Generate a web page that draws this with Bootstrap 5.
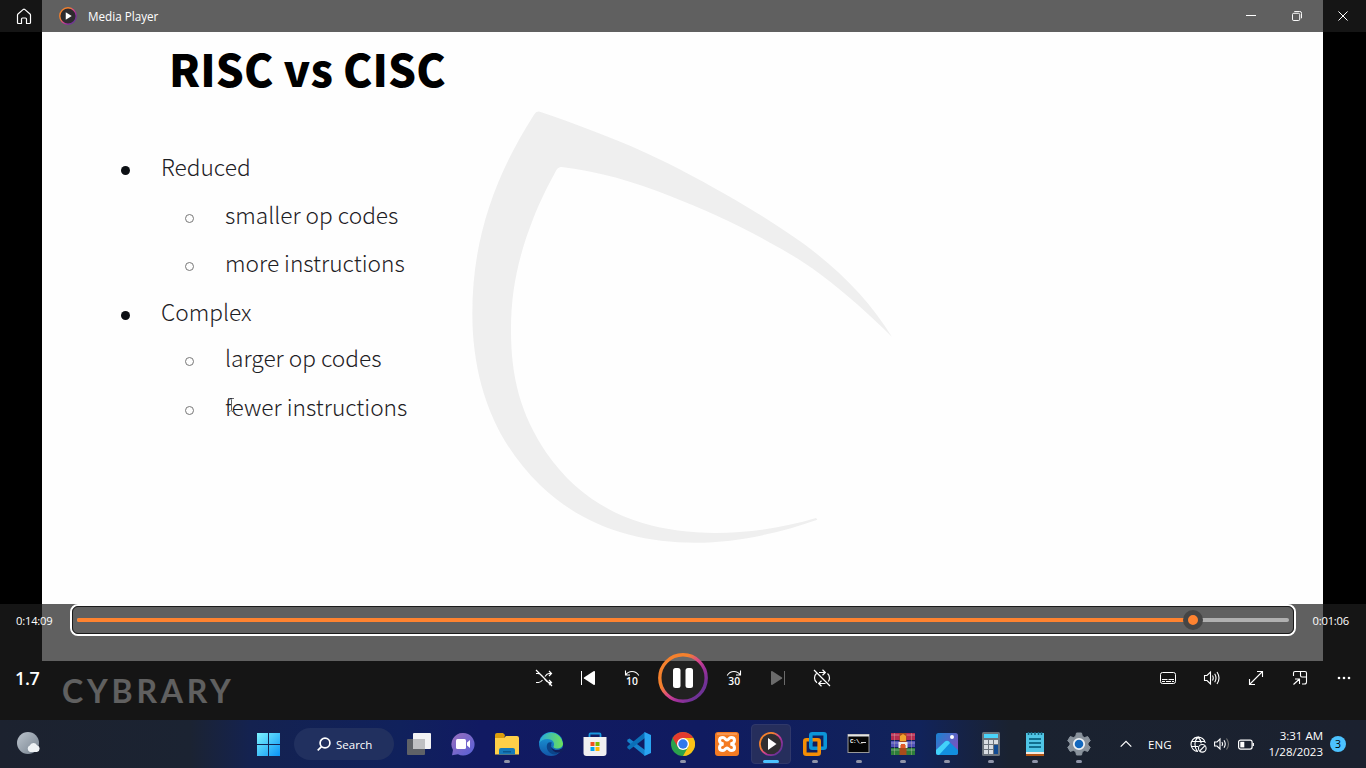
<!DOCTYPE html>
<html lang="en">
<head>
<meta charset="utf-8">
<meta name="viewport" content="width=device-width, initial-scale=1">
<title>Media Player</title>
<link href="https://cdn.jsdelivr.net/npm/bootstrap@5.3.0/dist/css/bootstrap.min.css" rel="stylesheet">
<style>
body{font-family:"Open Sans","Noto Sans",sans-serif;font-size:11px;line-height:16px;color:#fff;background:#000}
svg{display:block;flex:none}
.player{height:720px}
.video{width:1281px;margin-left:42px;height:720px;background:#000}
.slide{height:661px;background:#fefefe;font-family:"Noto Sans CJK SC","Open Sans",sans-serif;color:#1d2024}
.slide h1{font-size:44px;font-weight:900;color:#000;line-height:60px;padding:38px 0 0 127px;letter-spacing:.1px;white-space:nowrap}
.points{padding-top:45px;font-size:22.7px;font-weight:300}
.points li{height:48px;line-height:48px;white-space:nowrap}
.points .grp1{margin-top:1px}
.points .grp2{margin-top:-2px}
.points .last{margin-top:1px}
.lvl1{padding-left:78px}
.lvl2{padding-left:143px}
.dot{width:9px;height:9px;border-radius:50%;background:#0c0f14;margin:6px 31px 0 1px}
.ring{width:9px;height:9px;border-radius:50%;border:1px solid #777;margin:6px 31px 0 0}
.swirl{left:450px;top:90px}
.cursor{left:226px;top:397px}
.brandmark{margin:13px 0 0 20px;font-family:Lato,sans-serif;font-weight:700;font-size:32px;line-height:34px;letter-spacing:3.8px;color:#fff}
.shade{background:rgba(30,30,30,.706)}
.titlebar{height:32px}
.titlebar .cap{width:46px}
.appname{font-size:11.7px}
.seekrow{height:32px}
.seek{width:1226px;height:32px;border:2px solid #fff;border-radius:8px;padding:0}
.seek>div{border:1px solid #1b1b1b;border-radius:6px;height:100%;padding:0 4px}
.track{height:4px;background:#b0b0b0;border-radius:2px}
.fill{height:4px;background:#ff8330;border-radius:2px}
.thumb{width:20px;height:20px;border-radius:50%;border:5px solid #454545;background:#ff8330;top:-8px;transform:translateX(-50%)}
.time{width:70px;font-size:11.2px;letter-spacing:-.2px;padding-top:2px}
.ctrl{height:84px}
.side{width:522px}
.b44{width:44px}
.b58{width:58px}
.speed{font-size:18px;font-weight:600;letter-spacing:-.3px;padding-left:15px}
.taskbar{height:48px;background:linear-gradient(90deg,#1c222f 0,#1b2332 190px,#142250 250px,#10215c 400px,#111a62 480px,#101b60 700px,#11235a 920px,#1a2230 1010px,#1b212f 1366px)}
.slot{width:44px;height:48px}
.start{margin-left:217px}
.search{width:100px;height:32px;border-radius:16px;background:#21305f;margin:0 3px 0 4px;font-size:11.5px}
.search span{padding-top:1px}
.slot .pip{bottom:5px;left:19px;width:6px;height:3px;border-radius:2px;background:#8f94a8}
.slot.act::before{content:"";position:absolute;inset:4px 2px;border-radius:4px;background:#262e5c;border:1px solid #30386a}
.slot.act .pip{left:14px;width:16px;background:#4cc2ff}
.tray{font-size:11.5px}
.note{width:16px;height:16px;border-radius:50%;background:#4cc2ff;color:#000;font-size:10.5px}
</style>
</head>
<body class="overflow-hidden">
<main class="player position-relative">
  <div class="video">
    <section class="slide">
      <h1 class="m-0">RISC vs CISC</h1>
      <ul class="points list-unstyled m-0">
        <li class="lvl1 d-flex align-items-center"><i class="dot"></i><span>Reduced</span></li>
        <li class="lvl2 d-flex align-items-center"><i class="ring"></i><span>smaller op codes</span></li>
        <li class="lvl2 d-flex align-items-center"><i class="ring"></i><span>more instructions</span></li>
        <li class="lvl1 grp1 d-flex align-items-center"><i class="dot"></i><span>Complex</span></li>
        <li class="lvl2 grp2 d-flex align-items-center"><i class="ring"></i><span>larger op codes</span></li>
        <li class="lvl2 last d-flex align-items-center"><i class="ring"></i><span>fewer instructions</span></li>
      </ul>
    </section>
    <div class="brandmark">CYBRARY</div>
  </div>
  <svg class="swirl position-absolute" width="460" height="470" viewBox="0 0 1380 1410"><path fill="#efefef" d="M252 74Q260 60 274 67C380 103 490 145 580 185C680 230 770 280 860 332C930 373 1000 418 1062 462C1180 550 1260 635 1326 741C1260 675 1190 612 1110 552C1065 518 1015 488 960 458C860 402 760 357 660 318C550 275 450 245 335 231Q325 230 318 242C290 293 265 345 250 385C205 500 183 600 183 720C183 860 210 970 290 1090C360 1190 450 1260 580 1300C730 1345 930 1335 1098 1284L1102 1289C1000 1325 870 1358 735 1358C560 1358 400 1310 270 1185C130 1050 67 870 67 670C67 470 120 280 252 74Z"/></svg>
  <svg class="cursor position-absolute" width="10" height="16" viewBox="0 0 10 16" fill="none" stroke="#666"><path d="M2 1.500h2l1 1 1-1h2M5.500 2.500v11M2 14.500h2l1-1 1 1h2"/></svg>

  <div class="position-absolute top-0 start-0 w-100 h-100 d-flex flex-column justify-content-between">
    <header class="titlebar shade d-flex align-items-center">
      <svg width="16" height="17" viewBox="0 0 16 17" style="margin-left:16px" fill="none" stroke="#fff" stroke-width="1.2" stroke-linejoin="round"><path d="M1.500 7.200Q1.500 6.500 2 6L7.300 1.400Q8 .9 8.700 1.400L14 6Q14.500 6.500 14.500 7.200V14.500Q14.500 15.500 13.500 15.500H10.500V11Q10.500 10 9.500 10H6.500Q5.500 10 5.500 11V15.500H2.500Q1.500 15.500 1.500 14.500Z"/></svg>
      <svg width="18" height="18" viewBox="0 0 24 24" style="margin:0 11px 0 27px"><circle cx="12" cy="12" r="11" fill="#2d2b2e" stroke="url(#ringg)" stroke-width="1.800"/><path d="M9 7v10l8-5z" fill="#fff"/></svg>
      <span class="appname me-auto">Media Player</span>
      <div class="cap d-flex justify-content-center"><svg width="10" height="10" stroke="#fff"><path d="M0 4.500h10"/></svg></div>
      <div class="cap d-flex justify-content-center"><svg width="10" height="10" viewBox="0 0 11 11" fill="none" stroke="#fff" stroke-width="1.100"><rect x=".5" y="2.500" width="8" height="8" rx="1.500"/><path d="M2.500.5H8.500Q10.500.5 10.500 2.500V8"/></svg></div>
      <div class="cap d-flex justify-content-center"><svg width="10" height="10" viewBox="0 0 11 11" stroke="#fff" stroke-width="1.100"><path d="M.5.5l10 10M10.500.5l-10 10"/></svg></div>
    </header>

    <footer class="shade">
      <div class="seekrow d-flex align-items-center">
        <span class="time ps-3">0:14:09</span>
        <div class="seek"><div class="d-flex align-items-center"><div class="track w-100 position-relative"><div class="fill" style="width:92.1%"></div><i class="thumb position-absolute" style="left:92.1%"></i></div></div></div>
        <span class="time text-end" style="padding-right:17px">0:01:06</span>
      </div>
      <div class="ctrl d-flex align-items-center">
        <div class="side speed">1.7</div>
        <div class="b44 d-flex justify-content-center"><svg width="18" height="18" viewBox="0 0 18 18" fill="none" stroke="#fff" stroke-width="1.200"><path d="M1 4.500h2Q5.500 4.500 8 8L10 10.500Q12 13.500 14 13.500H16.500M1 13.500h2.500Q5.500 13.500 7.500 11M10 7.500Q12 4.500 14 4.500H16.500M14 2l2.500 2.500L14 7M14 11l2.500 2.500L14 16M1 1l16 16"/></svg></div>
        <div class="b44 d-flex justify-content-center"><svg width="16" height="16" viewBox="0 0 16 16"><path d="M1.500 1v14" stroke="#fff"/><path d="M4 7.400L13.500 1.200Q15 .6 15 2V14Q15 15.400 13.500 14.800L4 8.600Q3.400 8 4 7.400Z" fill="#fff"/></svg></div>
        <div class="b44 d-flex justify-content-center"><svg width="18" height="18" viewBox="0 0 18 18" fill="none" stroke="#fff" stroke-width="1.100"><path d="M2.500 1.500v4.500H7M2.700 5.800Q5 2.500 9 2.500Q13.500 2.500 15.800 6.500"/><text x="9" y="16.300" text-anchor="middle" font-size="10.300" font-weight="600" fill="#fff" stroke="none">10</text></svg></div>
        <div class="b58 d-flex justify-content-center"><svg width="50" height="50" viewBox="0 0 50 50"><defs><linearGradient id="ringg" x1=".15" y1=".2" x2=".85" y2=".8"><stop offset=".25" stop-color="#f5812d"/><stop offset=".5" stop-color="#d9478a"/><stop offset=".72" stop-color="#a2309b"/><stop offset="1" stop-color="#6f3296"/></linearGradient></defs><circle cx="25" cy="25" r="23.200" fill="#fff" fill-opacity=".055" stroke="url(#ringg)" stroke-width="3.400"/><rect x="15" y="15" width="7.500" height="20" rx="2.500" fill="#fff"/><rect x="27.500" y="15" width="7.500" height="20" rx="2.500" fill="#fff"/></svg></div>
        <div class="b44 d-flex justify-content-center"><svg width="18" height="18" viewBox="0 0 18 18" fill="none" stroke="#fff" stroke-width="1.100"><path d="M15.500 1.500v4.500H11M15.300 5.800Q13 2.500 9 2.500Q4.500 2.500 2.200 6.500"/><text x="9.200" y="16.300" text-anchor="middle" font-size="10.300" font-weight="600" fill="#fff" stroke="none">30</text></svg></div>
        <div class="b44 d-flex justify-content-center"><svg width="16" height="16" viewBox="0 0 16 16"><path d="M14.500 1v14" stroke="#6b6b6b"/><path d="M12 7.400L2.500 1.200Q1 .6 1 2V14Q1 15.400 2.500 14.800L12 8.600Q12.600 8 12 7.400Z" fill="#6b6b6b"/></svg></div>
        <div class="b44 d-flex justify-content-center"><svg width="18" height="18" viewBox="0 0 18 18" fill="none" stroke="#fff" stroke-width="1.200"><path d="M1 1l16 16M6 3.500H12M9.500.8L12.300 3.500 9.500 6.200M14.500 4.500Q16.500 6 16.500 9Q16.500 11 15.300 12.500M3.500 4.500Q1.500 6 1.500 9Q1.500 12 4 13.700M12.500 14.500H6M8.500 11.800L5.700 14.500 8.500 17.200"/></svg></div>
        <div class="ms-auto b44 d-flex justify-content-center"><svg width="16" height="12" fill="none" stroke="#fff"><rect x=".5" y=".5" width="15" height="11" rx="2"/><path d="M2 7.500h5.500M8.500 7.500h5.500M2 9.500h3M6 9.500h5M12 9.500h2"/></svg></div>
        <div class="b44 d-flex justify-content-center"><svg width="18" height="16" viewBox="0 0 18 16" fill="none" stroke="#fff" stroke-width="1.100"><path d="M1.500 5.500H4L7.500 2V14L4 10.500H1.500ZM9.500 5.500Q11 8 9.500 10.500M11.700 3.700Q14.300 8 11.700 12.300M14 2Q18 8 14 14"/></svg></div>
        <div class="b44 d-flex justify-content-center"><svg width="16" height="16" fill="none" stroke="#fff" stroke-width="1.100"><path d="M1.500 14.500l13-13M9 1.500h5.500V7M1.500 9v5.500H7"/></svg></div>
        <div class="b44 d-flex justify-content-center"><svg width="16" height="16" fill="none" stroke="#fff" stroke-width="1.100"><path d="M1.500 6V3Q1.500 1.500 3 1.500H13Q14.500 1.500 14.500 3V12Q14.500 14 12.500 14H10M8.500 1.500V5.500Q8.500 7 10 7H14.500M1.500 14.500l6-5.500M3 9h4.500V14"/></svg></div>
        <div class="b44 d-flex justify-content-center"><svg width="14" height="4" fill="#fff"><circle cx="2" cy="2" r="1.300"/><circle cx="7" cy="2" r="1.300"/><circle cx="12" cy="2" r="1.300"/></svg></div>
      </div>
    </footer>
  </div>
</main>

<nav class="taskbar d-flex align-items-center">
  <svg width="24" height="24" viewBox="0 0 24 24" style="margin-left:16px;margin-right:-11px"><defs><linearGradient id="moon" x1="0" y1="0" x2="1" y2="1"><stop stop-color="#bcc4cd"/><stop offset="1" stop-color="#76828f"/></linearGradient></defs><circle cx="12" cy="11" r="11" fill="url(#moon)"/><path d="M14 20a3.500 3.500 0 0 1-.2-6.500 4 4 0 0 1 7.200-.3 3.500 3.500 0 0 1 0 6.800z" fill="#eef2f5"/></svg>
  <div class="slot start d-flex align-items-center justify-content-center"><svg width="23" height="23"><defs><linearGradient id="win" gradientUnits="userSpaceOnUse" x1="0" y1="0" x2="23" y2="23"><stop stop-color="#7df3ff"/><stop offset="1" stop-color="#0a93f5"/></linearGradient></defs><path fill="url(#win)" d="M0 0h11v11H0zM12 0h11v11H12zM0 12h11v11H0zM12 12h11v11H12z"/></svg></div>
  <div class="search d-flex align-items-center"><svg width="14" height="14" fill="none" stroke="#fff" stroke-width="1.700" style="margin:0 5px 0 23px"><circle cx="8" cy="6" r="4.900"/><path d="M4.500 9.700L.7 13.400"/></svg><span>Search</span></div>
  <div class="slot d-flex align-items-center justify-content-center"><svg width="24" height="24"><rect x="6" y="1" width="18" height="16" rx="1" fill="#f3f3f4"/><rect x="0" y="7" width="18" height="16" rx="1" fill="#5f6267"/><path d="M6 7h12v10H6z" fill="#bfc0c2"/></svg></div>
  <div class="slot d-flex align-items-center justify-content-center"><svg width="24" height="24"><defs><linearGradient id="chat" x1="0" x2="1" y2="1"><stop stop-color="#9a6fbd"/><stop offset="1" stop-color="#5560d8"/></linearGradient></defs><path d="M12 1a11.300 11.300 0 1 1-5 21.300L1 23.300 2 18A11.300 11.300 0 0 1 12 1z" fill="url(#chat)"/><rect x="5" y="7" width="10" height="10" rx="1.500" fill="#fff"/><path d="M16 10.500l3-2.500v8l-3-2.500z" fill="#fff"/></svg></div>
  <div class="slot position-relative d-flex align-items-center justify-content-center"><svg width="24" height="24"><path d="M0 3q0-2 2-2h6l2 2-1 4H0z" fill="#dc9d0c"/><path d="M0 6h9l2-2h11q2 0 2 2v16.500H0z" fill="#ffcf48"/><path d="M4 22.500v-4.500q0-2 2-2h12q2 0 2 2v4.500z" fill="#1679ba"/><path d="M8 19h8v1.500H8z" fill="#0b568f"/></svg><i class="pip position-absolute"></i></div>
  <div class="slot d-flex align-items-center justify-content-center"><svg width="24" height="24"><defs><linearGradient id="edg" x1="0" x2="1"><stop stop-color="#27a8e0"/><stop offset="1" stop-color="#6de257"/></linearGradient><linearGradient id="edb" x2="0" y2="1"><stop stop-color="#1ba1dd"/><stop offset="1" stop-color="#1257a8"/></linearGradient></defs><circle cx="12" cy="12" r="12" fill="url(#edb)"/><path d="M.2 11A12 12 0 0 1 24 11.500C24 15.500 20 17 17 16.500C14.500 16 14 15 14.700 14C16 11.500 14 7 8.500 7C4.500 7 1.500 9 .2 11z" fill="url(#edg)"/><path d="M8.500 11.500C6 16 10 23 17 22.500Q21 21 22.700 17C17 20 12.500 17 12 14.500Q11.500 12 13 10.500Q10 9.500 8.500 11.500z" fill="#0c4489"/><path d="M12.500 11.500q-1.500 4 2.500 6 4 1.500 7.500-1l1.500-.5v3l-1.500 1q-5 1.500-8-1t-2-7.500z" fill="#101f5c"/></svg></div>
  <div class="slot d-flex align-items-center justify-content-center"><svg width="24" height="24"><path d="M6.500 6V2.500Q6.500 1.500 7.500 1.500H16.500Q17.500 1.500 17.500 2.500V6" fill="none" stroke="#1796de" stroke-width="1.800"/><path d="M.5 5H23.500V21Q23.500 24 20.500 24H3.500Q.5 24 .5 21z" fill="#f0f0f1"/><path d="M7.500 10h4v4h-4z" fill="#f25022"/><path d="M12.500 10h4v4h-4z" fill="#7fba00"/><path d="M7.500 15h4v4h-4z" fill="#00a4ef"/><path d="M12.500 15h4v4h-4z" fill="#ffb900"/></svg></div>
  <div class="slot d-flex align-items-center justify-content-center"><svg width="24" height="24"><path d="M18 24L.3 9.600V7.800L2.500 6.500 18 18z" fill="#1682cd"/><path d="M18 0L.3 14.500V16L2.500 17.800 18 6z" fill="#0b70b8"/><path d="M17.500 0L24 3V21L17.500 24z" fill="#29a5f2"/></svg></div>
  <div class="slot position-relative d-flex align-items-center justify-content-center"><svg width="24" height="24"><circle cx="12" cy="12" r="12" fill="#2ba24c"/><path d="M1.600 6A12 12 0 0 1 22.400 6L12 7 6.800 15z" fill="#e33b2e"/><path d="M22.400 6A12 12 0 0 1 12 24L17.200 15 12 6z" fill="#fbc116"/><circle cx="12" cy="12" r="6" fill="#fff"/><circle cx="12" cy="12" r="4.700" fill="#2f78ed"/></svg><i class="pip position-absolute"></i></div>
  <div class="slot d-flex align-items-center justify-content-center"><svg width="24" height="24"><rect width="24" height="24" rx="3" fill="#f47b22"/><path d="M2 2h20" stroke="#fbb27d"/><path d="M8.500 12C3 11 3.500 5.500 8 5.500C10 5.500 10.500 8 12 8S14 5.500 16 5.500C20.500 5.500 21 11 15.500 12C21 13 20.500 18.500 16 18.500C14 18.500 13.500 16 12 16S10 18.500 8 18.500C3.500 18.500 3 13 8.500 12z" fill="none" stroke="#fff" stroke-width="3"/></svg></div>
  <div class="slot act position-relative d-flex align-items-center justify-content-center"><svg class="position-relative" width="24" height="24"><circle cx="12" cy="12" r="11.100" fill="#302e31" stroke="url(#ringg)" stroke-width="1.700"/><path d="M9 6v12l8.500-6z" fill="#fff"/></svg><i class="pip position-absolute"></i></div>
  <div class="slot position-relative d-flex align-items-center justify-content-center"><svg width="24" height="24" fill="none" stroke-width="3.600"><rect x="7.800" y="1.800" width="14.400" height="14.400" rx="1.500" stroke="#0c95d8"/><rect x="1.800" y="7.800" width="14.400" height="14.400" rx="1.500" stroke="#f48d05"/><path d="M7.800 6V11" stroke="#0c95d8"/></svg><i class="pip position-absolute"></i></div>
  <div class="slot position-relative d-flex align-items-center justify-content-center"><svg width="24" height="24"><rect x="1" y="2.500" width="21" height="18" fill="#050505" stroke="#999"/><path d="M1 3.500h21" stroke="#e4e4e4" stroke-width="2"/><text x="3" y="11" font-family="Liberation Mono,monospace" font-weight="700" font-size="6" letter-spacing="-.6" fill="#fff">C:\_</text><path d="M14 10.500h5" stroke="#ddd"/></svg><i class="pip position-absolute"></i></div>
  <div class="slot position-relative d-flex align-items-center justify-content-center"><svg width="24" height="24"><path d="M0 1h24v7H0z" fill="#b52b50"/><path d="M0 9h24v6H0z" fill="#5051b8"/><path d="M0 16h24v7H0z" fill="#2c7d3a"/><path d="M0 3h24M0 11h24M0 18h24" stroke="#fff" stroke-opacity=".35"/><path d="M3.500 1v22M20.500 1v22" stroke="#d8c9a8" stroke-opacity=".35"/><path d="M8.500 1h7v22h-7z" fill="#a84b1c"/><path d="M9 4l3-2 3 2v5H9z" fill="#f0a42e"/><path d="M7.500 10h9v6h-2v-3h-5v3h-2z" fill="#f1eee6"/><path d="M10 12h4v4h-4z" fill="#e25a27"/></svg><i class="pip position-absolute"></i></div>
  <div class="slot position-relative d-flex align-items-center justify-content-center"><svg width="24" height="24"><defs><linearGradient id="pho" x2="1" y2=".7"><stop stop-color="#1783d2"/><stop offset="1" stop-color="#7f51bd"/></linearGradient></defs><rect x="1" y="1" width="22" height="22" rx="2.500" fill="url(#pho)"/><path d="M1 18L10 9.500q2-1.500 4 0L23 18v2.500q0 2.500-2.500 2.500h-17Q1 23 1 20.500z" fill="#128fdf"/><path d="M1 18L10 9.500q2-1.500 4 0L15 11 4 23Q1 23 1 20.500z" fill="#43d2fa"/><circle cx="17" cy="5" r="2" fill="#fff"/></svg><i class="pip position-absolute"></i></div>
  <div class="slot position-relative d-flex align-items-center justify-content-center"><svg width="24" height="24"><rect x="3" width="18" height="24" rx="1.500" fill="#6b737c"/><path d="M5 2h14v4H5z" fill="#4bd4fa"/><path d="M5 8h4v4H5zM10 8h4v4h-4zM15 8h4v4h-4zM5 13h4v4H5zM10 13h4v4h-4zM5 18h4v4H5zM10 18h4v4h-4z" fill="#d9dde2"/><path d="M15 13h4v9h-4z" fill="#114b93"/></svg><i class="pip position-absolute"></i></div>
  <div class="slot position-relative d-flex align-items-center justify-content-center"><svg width="24" height="24"><path d="M3 21h18v3H3z" fill="#b35513"/><path d="M3 19h18v3H3z" fill="#f3e9df"/><path d="M3 1h18v19H3z" fill="#4fc5e5"/><path d="M6 7h12M6 11h12M6 15h12" stroke="#116f8e" stroke-width="1.800"/><path d="M5.500 0v3M8.500 0v3M12 0v3M15.500 0v3M18.500 0v3" stroke="#17627d" stroke-width="1.500"/></svg><i class="pip position-absolute"></i></div>
  <div class="slot position-relative d-flex align-items-center justify-content-center"><svg width="24" height="24"><path d="M9.500 1h5l.8 3.300 2.200 1.300 3.300-1 2.500 4.200L21 11v2l2.300 2.200-2.500 4.200-3.300-1-2.200 1.300-.8 3.300h-5l-.8-3.300-2.200-1.300-3.300 1L.7 15.200 3 13v-2L.7 8.800l2.500-4.200 3.300 1 2.200-1.300z" fill="#89929c" stroke="#89929c" stroke-linejoin="round"/><circle cx="12" cy="12" r="5.200" fill="#1267bd" stroke="#eef1f4" stroke-width="1.800"/></svg><i class="pip position-absolute"></i></div>

  <div class="tray d-flex align-items-center ms-auto">
    <svg width="12" height="8" fill="none" stroke="#fff" stroke-width="1.200"><path d="M.7 6.700L6 1.300l5.300 5.400"/></svg>
    <span style="margin:0 18px 0 16px;padding-top:1px">ENG</span>
    <svg width="17" height="17" fill="none" stroke="#fff" stroke-width="1.100"><path d="M15.300 7A7.200 7.200 0 1 0 8 15.500M1.300 5.500h13.500M1.300 10.500h7M8 1C4 5 4 11 7.500 15.500M8 1Q11 4 11.200 7.300"/><circle cx="12.300" cy="12.300" r="3.800"/><path d="M9.700 15l5.300-5.300"/></svg>
    <svg width="16" height="14" fill="none" stroke="#fff" stroke-width="1.100" style="margin:0 8px 0 7px"><path d="M.6 5H3L6 2V12L3 9H.6ZM8 5q1.200 2 0 4M10 3.300q2.500 3.700 0 7.400"/><path d="M12.500 1.500q4 5.500 0 11" stroke="#777"/></svg>
    <svg width="17" height="11"><rect x=".6" y="1.100" width="13.500" height="9" rx="2" fill="none" stroke="#fff" stroke-width="1.200"/><rect x="2.300" y="2.800" width="4" height="5.600" fill="#fff"/><path d="M15.300 4v3" stroke="#fff" stroke-width="1.300"/></svg>
    <div class="text-end" style="margin-left:14px">3:31 AM<br>1/28/2023</div>
    <span class="note d-flex align-items-center justify-content-center" style="margin:0 20px 0 7px">3</span>
  </div>
</nav>
<script src="https://cdn.jsdelivr.net/npm/bootstrap@5.3.0/dist/js/bootstrap.bundle.min.js"></script>
</body>
</html>
